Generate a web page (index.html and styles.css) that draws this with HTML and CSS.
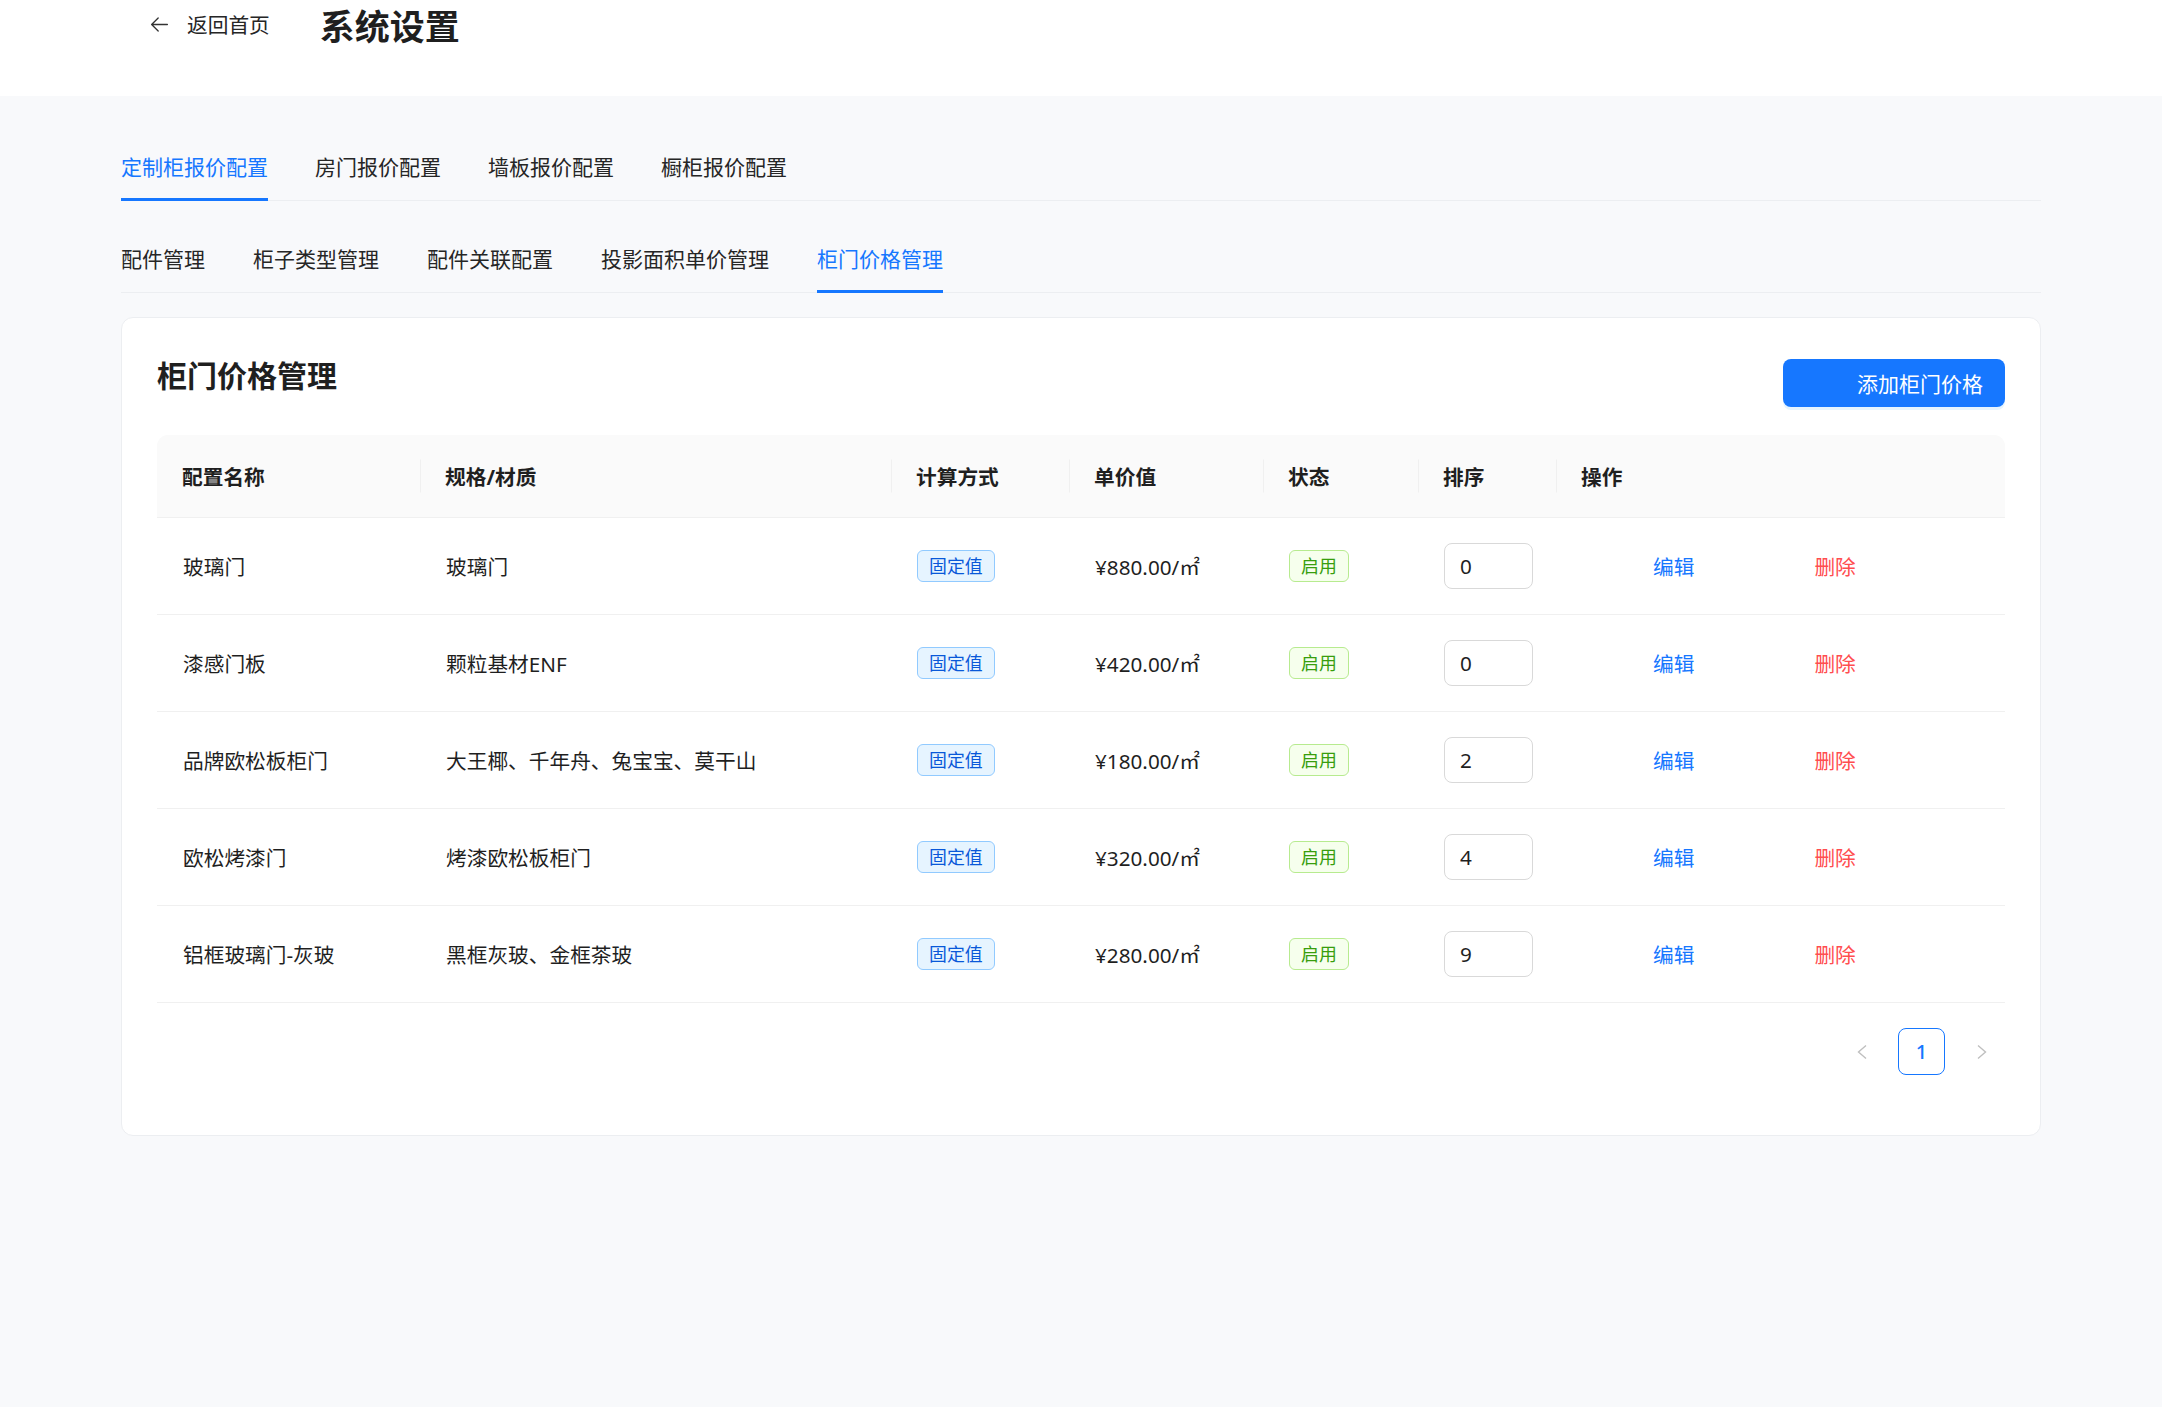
FILE: index.html
```html
<!DOCTYPE html>
<html lang="zh-CN">

<head>
    <meta charset="UTF-8">
    <meta name="viewport" content="width=device-width, initial-scale=1.0">
    <title>系统设置</title>
    <link rel="stylesheet" href="styles.css">
</head>

<body>
    <header class="topbar">
        <a class="back-link" href="#">
            <svg class="back-icon" viewBox="0 0 24 24" width="21" height="21">
                <path d="M21 12H3.5M10.5 4.5L3 12l7.5 7.5" fill="none" stroke="#333" stroke-width="1.5" stroke-linecap="round" stroke-linejoin="round"/>
            </svg>
            <span>返回首页</span>
        </a>
        <h1 class="page-title">系统设置</h1>
    </header>

    <main class="container">
        <nav class="tabs">
            <a class="tab active" href="#">定制柜报价配置</a>
            <a class="tab" href="#">房门报价配置</a>
            <a class="tab" href="#">墙板报价配置</a>
            <a class="tab" href="#">橱柜报价配置</a>
        </nav>

        <nav class="tabs sub-tabs">
            <a class="tab" href="#">配件管理</a>
            <a class="tab" href="#">柜子类型管理</a>
            <a class="tab" href="#">配件关联配置</a>
            <a class="tab" href="#">投影面积单价管理</a>
            <a class="tab active" href="#">柜门价格管理</a>
        </nav>

        <section class="card">
            <div class="card-head">
                <h2 class="card-title">柜门价格管理</h2>
                <button class="btn-primary" type="button">添加柜门价格</button>
            </div>

            <table class="price-table">
                <colgroup>
                    <col style="width: 263px">
                    <col style="width: 471px">
                    <col style="width: 178px">
                    <col style="width: 194px">
                    <col style="width: 155px">
                    <col style="width: 138px">
                    <col>
                </colgroup>
                <thead>
                    <tr>
                        <th>配置名称</th>
                        <th>规格/材质</th>
                        <th>计算方式</th>
                        <th>单价值</th>
                        <th>状态</th>
                        <th>排序</th>
                        <th>操作</th>
                    </tr>
                </thead>
                <tbody>
                    <tr>
                        <td>玻璃门</td>
                        <td>玻璃门</td>
                        <td><span class="tag tag-blue">固定值</span></td>
                        <td>¥880.00/㎡</td>
                        <td><span class="tag tag-green">启用</span></td>
                        <td><input class="sort-input" type="text" value="0"></td>
                        <td>
                            <div class="actions">
                                <a class="link-edit" href="#">编辑</a>
                                <a class="link-delete" href="#">删除</a>
                            </div>
                        </td>
                    </tr>
                    <tr>
                        <td>漆感门板</td>
                        <td>颗粒基材ENF</td>
                        <td><span class="tag tag-blue">固定值</span></td>
                        <td>¥420.00/㎡</td>
                        <td><span class="tag tag-green">启用</span></td>
                        <td><input class="sort-input" type="text" value="0"></td>
                        <td>
                            <div class="actions">
                                <a class="link-edit" href="#">编辑</a>
                                <a class="link-delete" href="#">删除</a>
                            </div>
                        </td>
                    </tr>
                    <tr>
                        <td>品牌欧松板柜门</td>
                        <td>大王椰、千年舟、兔宝宝、莫干山</td>
                        <td><span class="tag tag-blue">固定值</span></td>
                        <td>¥180.00/㎡</td>
                        <td><span class="tag tag-green">启用</span></td>
                        <td><input class="sort-input" type="text" value="2"></td>
                        <td>
                            <div class="actions">
                                <a class="link-edit" href="#">编辑</a>
                                <a class="link-delete" href="#">删除</a>
                            </div>
                        </td>
                    </tr>
                    <tr>
                        <td>欧松烤漆门</td>
                        <td>烤漆欧松板柜门</td>
                        <td><span class="tag tag-blue">固定值</span></td>
                        <td>¥320.00/㎡</td>
                        <td><span class="tag tag-green">启用</span></td>
                        <td><input class="sort-input" type="text" value="4"></td>
                        <td>
                            <div class="actions">
                                <a class="link-edit" href="#">编辑</a>
                                <a class="link-delete" href="#">删除</a>
                            </div>
                        </td>
                    </tr>
                    <tr>
                        <td>铝框玻璃门-灰玻</td>
                        <td>黑框灰玻、金框茶玻</td>
                        <td><span class="tag tag-blue">固定值</span></td>
                        <td>¥280.00/㎡</td>
                        <td><span class="tag tag-green">启用</span></td>
                        <td><input class="sort-input" type="text" value="9"></td>
                        <td>
                            <div class="actions">
                                <a class="link-edit" href="#">编辑</a>
                                <a class="link-delete" href="#">删除</a>
                            </div>
                        </td>
                    </tr>
                </tbody>
            </table>

            <div class="pagination">
                <span class="page-arrow">
                    <svg viewBox="0 0 12 16" width="12" height="16">
                        <polyline points="10,1.5 2.5,8 10,14.5" fill="none" stroke="#bfbfbf" stroke-width="1.4"/>
                    </svg>
                </span>
                <span class="page-item active">1</span>
                <span class="page-arrow">
                    <svg viewBox="0 0 12 16" width="12" height="16">
                        <polyline points="2,1.5 9.5,8 2,14.5" fill="none" stroke="#bfbfbf" stroke-width="1.4"/>
                    </svg>
                </span>
            </div>
        </section>
    </main>
</body>

</html>
```

FILE: styles.css
```css
body {
    margin: 0;
    background-color: #f8f9fb;
    font-family: "Noto Sans", "Noto Sans CJK SC", sans-serif;
    color: #1f1f1f;
}

a {
    text-decoration: none;
}

.topbar {
    height: 96px;
    box-sizing: border-box;
    padding: 0 0 48px 149px;
    background-color: #fff;
    display: flex;
    align-items: center;
}

.back-link {
    display: flex;
    align-items: center;
    gap: 17px;
    color: #262626;
    font-size: 20.7px;
}

.page-title {
    margin: 0 0 0 50px;
    font-size: 35px;
    font-weight: 700;
    color: #1f1f1f;
}

.container {
    padding: 40px 121px 60px;
}

.tabs {
    display: flex;
    gap: 47px;
    border-bottom: 1px solid #eceef1;
}

.tab {
    padding: 16px 0 16px;
    line-height: 30px;
    font-size: 21px;
    color: #262626;
    border-bottom: 3px solid transparent;
    margin-bottom: -1px;
}

.tab.active {
    color: #1677ff;
    border-bottom-color: #1677ff;
}

.sub-tabs {
    margin-top: 27px;
    gap: 48px;
}

.card {
    margin-top: 24px;
    padding: 35px 35px;
    background-color: #fff;
    border: 1px solid #eceef1;
    border-radius: 12px;
}

.card-head {
    display: flex;
    justify-content: space-between;
    align-items: flex-start;
    margin-bottom: 28px;
}

.card-title {
    margin: 0;
    line-height: 46px;
    font-size: 30px;
    font-weight: 700;
}

.btn-primary {
    margin-top: 6px;
    height: 48px;
    padding: 0 22px 0 74px;
    border: none;
    border-radius: 8px;
    background-color: #1677ff;
    color: #fff;
    font-family: inherit;
    font-size: 21px;
    box-shadow: 0 3px 0 rgba(5, 145, 255, 0.1);
    cursor: pointer;
}

.price-table {
    width: 100%;
    border-collapse: separate;
    border-spacing: 0;
    table-layout: fixed;
    font-size: 20.7px;
}

.price-table th {
    position: relative;
    height: 82px;
    padding: 0 24px 0 25px;
    text-align: left;
    font-weight: 700;
    background-color: #fafafa;
    border-bottom: 1px solid #f0f0f0;
}

.price-table th:first-child {
    border-top-left-radius: 11px;
}

.price-table th:last-child {
    border-top-right-radius: 11px;
}

.price-table th + th::before {
    content: "";
    position: absolute;
    left: 0;
    top: 50%;
    width: 1px;
    height: 33px;
    transform: translateY(-50%);
    background-color: #f0f0f0;
}

.price-table td {
    height: 96px;
    padding: 0 24px 0 26px;
    border-bottom: 1px solid #f0f0f0;
    vertical-align: middle;
    white-space: nowrap;
}

.tag {
    display: inline-block;
    padding: 0 11px;
    line-height: 30px;
    font-size: 17.9px;
    border: 1px solid;
    border-radius: 6px;
}

.tag-blue {
    color: #0958d9;
    background-color: #e6f4ff;
    border-color: #91caff;
}

.tag-green {
    color: #389e0d;
    background-color: #f6ffed;
    border-color: #b7eb8f;
}

.sort-input {
    width: 89px;
    height: 46px;
    box-sizing: border-box;
    padding: 0 15px;
    border: 1px solid #d9d9d9;
    border-radius: 8px;
    font-family: inherit;
    font-size: 20.7px;
    color: #1f1f1f;
}

.actions {
    display: flex;
    gap: 120px;
    padding-left: 71px;
}

.link-edit {
    color: #1677ff;
}

.link-delete {
    color: #ff4d4f;
}

.pagination {
    display: flex;
    justify-content: flex-end;
    gap: 13px;
    margin-top: 25px;
    margin-bottom: 25px;
}

.page-arrow,
.page-item {
    width: 47px;
    height: 47px;
    box-sizing: border-box;
    display: flex;
    align-items: center;
    justify-content: center;
}

.page-item {
    font-size: 20px;
    font-weight: 500;
    border-radius: 8px;
}

.page-item.active {
    color: #1677ff;
    border: 1px solid #1677ff;
}
```
